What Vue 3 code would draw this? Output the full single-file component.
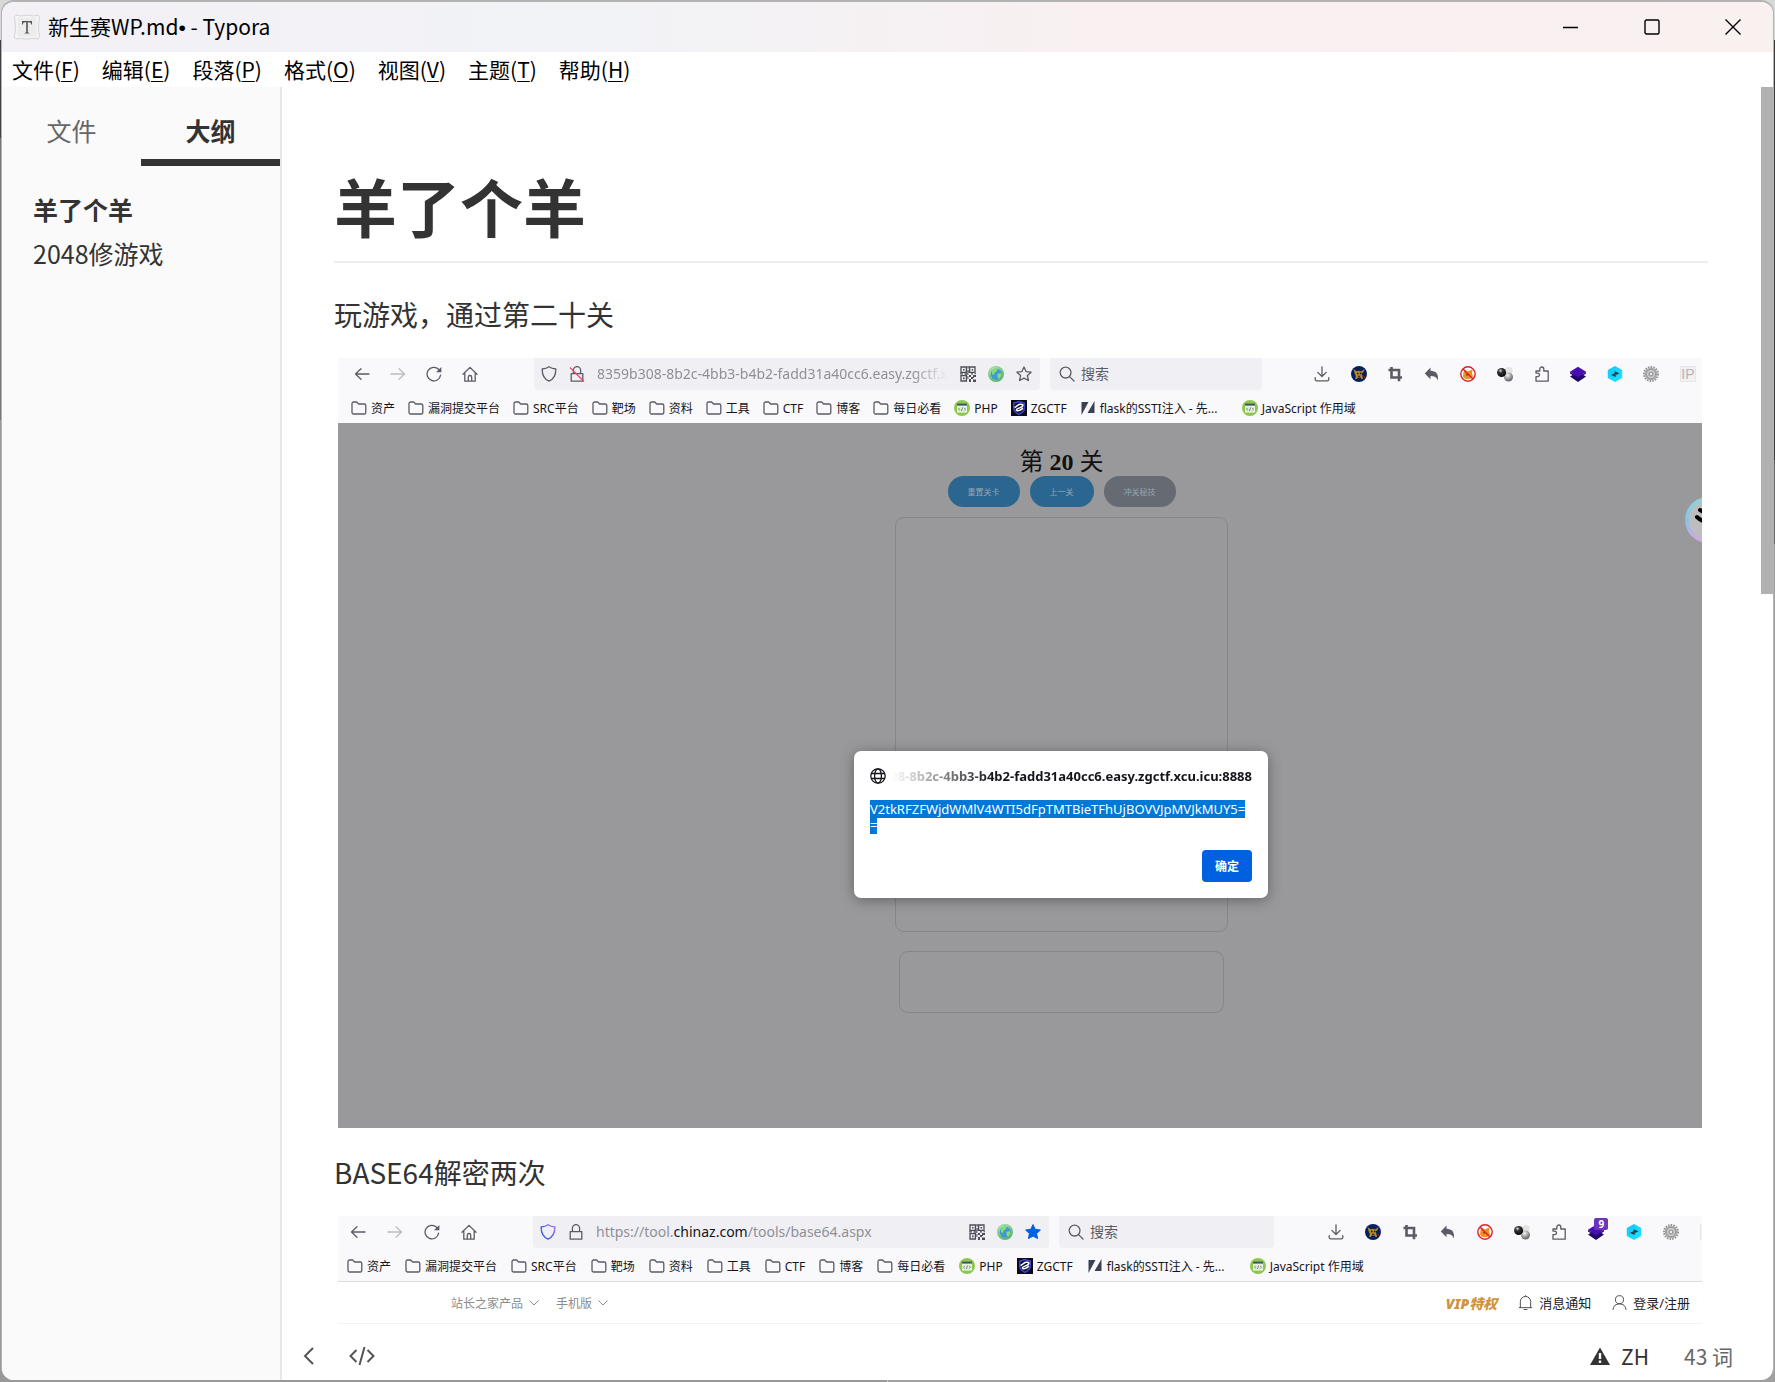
<script setup>
const menus = [
  ['文件', 'F'],
  ['编辑', 'E'],
  ['段落', 'P'],
  ['格式', 'O'],
  ['视图', 'V'],
  ['主题', 'T'],
  ['帮助', 'H'],
]

const line = 'fill="none" stroke="#5b5b66" stroke-width="1.3" stroke-linecap="round" stroke-linejoin="round"'

const icons = {
  back: `<path ${line} d="M15 8H1.5M7 2.8L1.5 8L7 13.2"/>`,
  forward: '<path fill="none" stroke="#bcbcc2" stroke-width="1.3" stroke-linecap="round" stroke-linejoin="round" d="M1 8h13.5M9 2.8L14.5 8L9 13.2"/>',
  reload: `<path ${line} d="M14.6 9.2A6.8 6.8 0 1 1 12.6 3.2"/><path fill="#5b5b66" d="M15.4 1v5.2h-5.4z"/>`,
  home: `<path ${line} d="M1 8.2L8 1.4l7 6.8M2.8 6.8v8.4h10.4V6.8M6.3 15v-3.8a1.7 1.7 0 0 1 3.4 0V15"/>`,
  shield: `<path ${line} d="M8 .8c2.2 1.6 4.5 2 6.8 2.2c.2 5.6-1.8 10-6.8 12.2C3 13 1 8.6 1.2 3C3.5 2.8 5.8 2.4 8 .8z"/>`,
  shieldBlue: '<defs><linearGradient id="sh" x1="1" y1="0" x2="0" y2="1"><stop offset="0" stop-color="#b070ff"/><stop offset=".6" stop-color="#3f62e6"/></linearGradient></defs><path fill="none" stroke="url(#sh)" stroke-width="1.4" d="M8 .8c2.2 1.6 4.5 2 6.8 2.2c.2 5.6-1.8 10-6.8 12.2C3 13 1 8.6 1.2 3C3.5 2.8 5.8 2.4 8 .8z"/>',
  lock: `<path ${line} d="M2.2 7.6h11.6v7.6H2.2zM4.4 7.4V4.2a3.6 3.6 0 0 1 7.2 0v3.2"/>`,
  lockOff: `<path ${line} d="M2.2 7.6h11.6v7.6H2.2zM4.4 7.4V4.2a3.6 3.6 0 0 1 7.2 0v3.2"/><path stroke="#f0436b" stroke-width="1.3" d="M1 1.5L15 15.5"/>`,
  qr: '<path fill="none" stroke="#4d4d58" stroke-width="1.3" d="M1 1h5.4v5.4H1zM9.6 1H15v5.4H9.6zM1 9.6h5.4V15H1z"/><path fill="#4d4d58" d="M3 3h1.6v1.6H3zM11.6 3h1.6v1.6h-1.6zM3 11.6h1.6v1.6H3zM7.4 0h1.3v2.5H7.4zM7.4 4h1.3v3h-1.3zM0 7.3h3v1.2H0zM4.5 7.3h4v1.5h-4zM9 9h2v2H9zM11 11h2v2h-2zM13 9h3v2h-2v1h-1zM9 13h2v3H9zM13 13.500h3V16h-3zM7.4 10h1v3h-1zM11 7.3h2v1.2h-2zM14.5 7.3H16v1h-1.5z"/>',
  globe: '<defs><radialGradient id="gl" cx=".4" cy=".3" r=".8"><stop offset="0" stop-color="#b9ecc0"/><stop offset="1" stop-color="#4fae5c"/></radialGradient></defs><circle cx="8" cy="8" r="8" fill="url(#gl)"/><circle cx="8.3" cy="8.2" r="5.6" fill="#3f9ad6"/><path fill="#8fdc6e" d="M4 5c1.5-2 4-3 6-2.4L9 5 6.5 6.5 6 9 4 8zM9.5 8l3.5-1 .5 2.5-2.5 3.5L9.5 11z"/>',
  star: `<path ${line} d="M8 1l2.1 4.6 5 .6-3.7 3.4 1 4.9L8 12.1l-4.4 2.4 1-4.9L.9 6.2l5-.6z"/>`,
  starOn: '<path fill="#0061e0" stroke="#0061e0" stroke-linejoin="round" d="M8 .6l2.2 4.7 5.2.7-3.8 3.5 1 5.1L8 12.1l-4.6 2.5 1-5.1L.6 6l5.2-.7z"/>',
  search: `<circle ${line} cx="6.6" cy="6.6" r="5.4"/><path ${line} d="M10.6 10.6L15 15"/>`,
  download: `<path ${line} d="M8 .8v9.4M3.8 6.400L8 10.5l4.2-4.1M1.2 11.6v1.6a1.6 1.6 0 0 0 1.6 1.6h10.4a1.6 1.6 0 0 0 1.6-1.6v-1.6"/>`,
  monkey: '<circle cx="8" cy="8" r="8" fill="#06205c"/><path fill="#b8892b" d="M2.500 3l1.500 1.200 2 1L8 4.800l2 .6 1.500-1L13.500 3l-1 3-1.800 1.500 .5 1.500.8 4h-1.500l-.8-1.500h-3L6 13H4.300l.5-3.500L4 8.500z"/><path fill="#18181c" d="M6 6.800h1.500v1.400H6zM8.900 6.800h1.500v1.400H8.900zM7 9.800h2.200v1H7z"/><path fill="#8d1b1b" d="M12.5 9.500l2 1-1.5 2z"/>',
  crop: '<path fill="none" stroke="#5b5b66" stroke-width="2.6" d="M1.5 4H12v11.2M4.5 1v10.5H15"/>',
  undo: '<path fill="#5b5b66" d="M6.5 1.500v3.2c5 .2 8.6 2.8 7.2 9.8-.8-3-3-4.4-7.2-4.4v3.2L.8 7.4z"/>',
  noFox: '<path fill="#f09219" d="M3.500 6l2-2 2 1.5 5-2-.5 4 1 3-3 2.500H5.500L3 10.5z"/><path fill="#7e4a16" d="M6 8h2v1.5H6z"/><circle cx="8" cy="8" r="7.2" fill="none" stroke="#d8232f" stroke-width="1.4"/><path stroke="#d8232f" stroke-width="1.5" d="M3 3l10 10"/>',
  balls: '<defs><radialGradient id="b1" cx=".38" cy=".3" r=".7"><stop offset="0" stop-color="#ddd"/><stop offset=".35" stop-color="#333"/><stop offset="1" stop-color="#080808"/></radialGradient><radialGradient id="b2" cx=".4" cy=".3" r=".8"><stop offset="0" stop-color="#f4f4f4"/><stop offset=".6" stop-color="#8a8a8a"/><stop offset="1" stop-color="#555"/></radialGradient></defs><circle cx="12" cy="4.5" r="3.6" fill="#e3e3e3"/><circle cx="11.5" cy="11" r="4.5" fill="url(#b2)"/><circle cx="4.6" cy="6.5" r="4.5" fill="url(#b1)"/>',
  puzzle: `<path ${line} d="M2 15.2v-4.6h1.8a1.7 1.7 0 0 0 0-3.5H2V5h3.8V3a2 2 0 0 1 4 0v2H14.2v10.2z"/>`,
  layers: '<path fill="#1f0763" d="M0 10.5L8 6l8 4.500L8 16z"/><path fill="#4a0db4" d="M0 5.800L8 .8l8 5-8 5.4z"/><path fill="#2c0a86" d="M0 5.8l8 5.4 8-5.4v1.8l-8 5.2-8-5.2z"/>',
  hex: '<defs><linearGradient id="hx" x1="0" y1="0" x2="1" y2="1"><stop offset="0" stop-color="#10c4ff"/><stop offset="1" stop-color="#1fe6ff"/></linearGradient></defs><path fill="url(#hx)" d="M8 0l7.2 4v8L8 16 .8 12V4z"/><path fill="#27424e" d="M3.8 9l4-2v1.3l1 .2V11zM12.6 7.2l-4 2V8l-1-.3V5.2z"/>',
  gear: '<circle cx="8" cy="8" r="7" fill="none" stroke="#929292" stroke-width="2" stroke-dasharray="1.6 1.1"/><circle cx="8" cy="8" r="6.200" fill="#a9a9a9"/><circle cx="8" cy="8" r="4.600" fill="#cfcfcf" stroke="#8a8a8a" stroke-width=".7"/><circle cx="8" cy="8" r="2.600" fill="#9a9a9a"/><circle cx="8" cy="8" r="1.200" fill="#eee"/>',
  folder: `<path ${line} d="M1 3.6a1.6 1.6 0 0 1 1.6-1.6h3.1l1.9 2h5.6A1.6 1.6 0 0 1 14.8 5.6v6.8a1.6 1.6 0 0 1-1.6 1.6H2.6A1.6 1.6 0 0 1 1 12.4z"/>`,
  runoob: '<circle cx="8" cy="8" r="8" fill="#8cc84b"/><path fill="#e6f1dc" d="M3 4h10v8.600H3z"/><path fill="#3d5560" d="M3 3.600h10v2H3z"/><path fill="none" stroke="#3d5560" stroke-width=".7" d="M5.800 7.800L4.600 9.200 5.800 10.600M10.200 7.800l1.200 1.400-1.200 1.400M8.500 7.500l-1 3.500"/>',
  zgctf: '<path fill="#0a0a1c" d="M0 0h16v16H0z"/><path fill="#3b46c8" d="M8 .8l6 1.6v6c0 3.2-3 5-6 6.8-3-1.800-6-3.600-6-6.800v-6z"/><path fill="#0d0f33" d="M8 2.600l4.500 1.200v4.400c0 2.400-2.200 4-4.500 5.400-2.300-1.400-4.500-3-4.500-5.400V3.800z"/><path fill="none" stroke="#fff" stroke-width="1.500" d="M3.500 7.500c2.500-.5 3-3 5.500-3.300s4 .8 2 2.400-5 1.600-5.500 3 2 1.400 3.500.6 2-1.600 3-2"/>',
  flask: '<path fill="#3a4252" d="M1.500 2h7L1.500 15zM14.5 1v12h-7z"/>',
}

const bookmarks = [
  ['folder', '资产'],
  ['folder', '漏洞提交平台'],
  ['folder', 'SRC平台'],
  ['folder', '靶场'],
  ['folder', '资料'],
  ['folder', '工具'],
  ['folder', 'CTF'],
  ['folder', '博客'],
  ['folder', '每日必看'],
  ['runoob', 'PHP'],
  ['zgctf', 'ZGCTF'],
  ['flask', 'flask的SSTI注入 - 先...'],
  ['runoob', 'JavaScript 作用域'],
]

const nav = [
  ['back', '后退'],
  ['forward', '前进'],
  ['reload', '刷新'],
  ['home', '主页'],
]

const tools = ['download', 'monkey', 'crop', 'undo', 'noFox', 'balls', 'puzzle', 'layers', 'hex', 'gear']

const shots = [
  { id: 'game', text: '玩游戏，通过第二十关', shield: 'shield', lock: 'lockOff', star: 'star' },
  { id: 'tool', text: 'BASE64解密两次', shield: 'shieldBlue', lock: 'lock', star: 'starOn', badge: '9' },
]
</script>

<template>
  <div class="desktop">
    <div class="window">
      <header class="titlebar">
        <svg class="app-icon" viewBox="0 0 28 28">
          <path d="M3 2q4 2 11 0q7 2 11 0q3 2 1 6q-1 6 0 12q2 4-1 6q-4-1-11 0q-7-1-11 0q-3-2-1-6q1-6 0-12q-2-4 1-6z" fill="#f4f4f4" stroke="#d4d4d6" />
          <path d="M4.500 4.500h19v19h-19z" fill="#ececec" />
          <path d="M9 8h10v3.500h-.8c-.2-1.600-.8-2.300-2.200-2.300h-1.200v9.600c0 .8.400 1 1.600 1.100v.7h-4.800v-.7c1.200-.1 1.600-.3 1.600-1.100V9.200H12c-1.400 0-2 .7-2.200 2.300H9z" fill="#555" />
        </svg>
        <h1 class="app-title">新生赛WP.md<span class="dot">•</span> - Typora</h1>
        <div class="controls">
          <button aria-label="最小化"><svg viewBox="0 0 16 16"><path d="M0 8.500h15" /></svg></button>
          <button aria-label="最大化"><svg viewBox="0 0 16 16"><rect x="1" y="1" width="14" height="14" rx="1.500" /></svg></button>
          <button aria-label="关闭"><svg viewBox="0 0 16 16"><path d="M.5.500l15 15M15.500.500l-15 15" /></svg></button>
        </div>
      </header>

      <nav class="menubar">
        <button v-for="[label, key] in menus" :key="key">{{ label }}(<u>{{ key }}</u>)</button>
      </nav>

      <div class="body">
        <aside class="sidebar">
          <div class="tabs">
            <button class="tab">文件</button>
            <button class="tab active">大纲</button>
          </div>
          <ul class="outline">
            <li><a href="#sheep" class="current">羊了个羊</a></li>
            <li><a href="#g2048">2048修游戏</a></li>
          </ul>
        </aside>

        <div class="editor">
          <main class="page">
            <h2 id="sheep" class="heading">羊了个羊</h2>

            <template v-for="shot in shots" :key="shot.id">
              <p class="para">{{ shot.text }}</p>
              <div class="shot" :class="shot.id">
                <div class="toolbar">
                  <div class="nav">
                    <button v-for="[icon, label] in nav" :key="icon" :aria-label="label">
                      <svg viewBox="0 0 16 16" v-html="icons[icon]"></svg>
                    </button>
                  </div>
                  <div class="address">
                    <svg viewBox="0 0 16 16" v-html="icons[shot.shield]"></svg>
                    <svg viewBox="0 0 16 16" v-html="icons[shot.lock]"></svg>
                    <input v-if="shot.id === 'game'" class="url fade" aria-label="地址" value="8359b308-8b2c-4bb3-b4b2-fadd31a40cc6.easy.zgctf.xcu.icu:8888" readonly />
                    <span v-else class="url">https://tool.<b>chinaz.com</b>/tools/base64.aspx</span>
                    <svg viewBox="0 0 16 16" v-html="icons.qr"></svg>
                    <svg viewBox="0 0 16 16" v-html="icons.globe"></svg>
                    <svg viewBox="0 0 16 16" v-html="icons[shot.star]"></svg>
                  </div>
                  <div class="search">
                    <svg viewBox="0 0 16 16" v-html="icons.search"></svg>
                    <input aria-label="搜索" placeholder="搜索" />
                  </div>
                  <div class="tools">
                    <button v-for="tool in tools" :key="tool" :aria-label="tool">
                      <svg viewBox="0 0 16 16" v-html="icons[tool]"></svg>
                      <span v-if="shot.badge && tool === 'layers'" class="badge">{{ shot.badge }}</span>
                    </button>
                    <span class="ip">{{ shot.id === 'game' ? 'IP' : '' }}</span>
                  </div>
                </div>

                <div class="bookmarks">
                  <a v-for="[icon, label] in bookmarks" :key="label" href="#" :class="icon">
                    <svg viewBox="0 0 16 16" v-html="icons[icon]"></svg>{{ label }}
                  </a>
                </div>

                <div v-if="shot.id === 'game'" class="stage">
                  <h3 class="level">第 <b>20</b> 关</h3>
                  <div class="actions">
                    <button>重置关卡</button>
                    <button>上一关</button>
                    <button class="muted">冲关秘技</button>
                  </div>
                  <div class="board"></div>
                  <div class="tray"></div>

                  <div class="dialog" role="dialog">
                    <div class="origin">
                      <svg viewBox="0 0 16 16"><circle cx="8" cy="8" r="7.200" /><ellipse cx="8" cy="8" rx="3.400" ry="7.200" /><path d="M1.500 5.500h13M1.500 10.500h13" /></svg>
                      <div class="host"><span>308-8b2c-4bb3-b4b2-fadd31a40cc6.easy.zgctf.xcu.icu:8888</span></div>
                    </div>
                    <p class="message"><mark>V2tkRFZFWjdWMlV4WTI5dFpTMTBieTFhUjBOVVJpMVJkMUY5=<br />=</mark></p>
                    <button class="ok">确定</button>
                  </div>

                  <svg class="floater" viewBox="0 0 46 46">
                    <defs>
                      <linearGradient id="ring" x1="0" y1="0" x2="0" y2="1">
                        <stop offset="0" stop-color="#8fd3dc" />
                        <stop offset=".5" stop-color="#86c3e2" />
                        <stop offset="1" stop-color="#d6a8e2" />
                      </linearGradient>
                    </defs>
                    <circle cx="23" cy="23" r="21" fill="#bdbdbf" stroke="url(#ring)" stroke-width="4" />
                    <path d="M12 20q5 5 10 4M15 13l5 3" fill="none" stroke="#000" stroke-width="4" stroke-linecap="round" />
                  </svg>
                </div>

                <div v-else class="sitebar">
                  <a href="#">站长之家产品 <svg class="chev" viewBox="0 0 10 10"><path d="M.5 2.500L5 7l4.500-4.500" /></svg></a>
                  <a href="#">手机版 <svg class="chev" viewBox="0 0 10 10"><path d="M.5 2.500L5 7l4.500-4.500" /></svg></a>
                  <div class="account">
                    <a href="#" class="vip">VIP特权</a>
                    <a href="#"><svg viewBox="0 0 16 16"><path d="M1 13.500h14M2.500 13.500V7a5.500 5.500 0 0 1 11 0v6.500M6 15.500h4M8 .3v1.200" /></svg>消息通知</a>
                    <a href="#"><svg viewBox="0 0 16 16"><circle cx="8" cy="5" r="4.300" /><path d="M1 15.800c.3-4.200 3-6.300 7-6.300s6.700 2.100 7 6.300" /></svg>登录/注册</a>
                  </div>
                </div>
              </div>
            </template>
          </main>

          <footer class="status">
            <button aria-label="隐藏侧边栏"><svg class="collapse" viewBox="0 0 12 20"><path d="M10 2L2 10l8 8" /></svg></button>
            <button aria-label="源代码模式"><svg class="source" viewBox="0 0 26 20"><path d="M7.500 4L1.500 10l6 6M18.500 4l6 6-6 6M15.500 1l-5 18" /></svg></button>
            <div class="right">
              <button class="lang">
                <svg viewBox="0 0 20 18"><path fill="#333" d="M10 .5L20 18H0z" /><path fill="#fff" d="M8.800 6h2.400v6H8.800zM8.800 13.500h2.400V16H8.800z" /></svg>
                ZH
              </button>
              <button class="count">43 词</button>
            </div>
          </footer>
        </div>
        <div class="scrollbar"><div class="thumb"></div></div>
      </div>
    </div>
  </div>
</template>

<style>
body {
  margin: 0;
}
</style>

<style scoped>
.desktop,
.desktop * {
  box-sizing: border-box;
}

.desktop {
  height: 100vh;
  padding: 2px;
  overflow: hidden;
  font-family: "Noto Sans", "Noto Sans CJK SC", sans-serif;
  color: #333;
  background:
    linear-gradient(#d8d8d8 40px, #3f3f44 40px 138px, #777 138px 420px, #999 420px) left / 50% 100% no-repeat,
    linear-gradient(#d8d8d8 40px, #3c3c3c 40px 460px, #666 460px 544px, #a0a0a0 544px) right / 50% 100% no-repeat;
}

button,
input {
  padding: 0;
  border: 0;
  background: none;
  font: inherit;
  color: inherit;
}

a {
  color: inherit;
  text-decoration: none;
}

svg {
  display: block;
  flex: none;
}

.window {
  display: flex;
  flex-direction: column;
  height: 100%;
  overflow: hidden;
  border-radius: 12px;
  background: #fff;
  box-shadow: 0 -1px 0 1px #b3b3b3;
}

.titlebar {
  display: flex;
  align-items: center;
  flex: none;
  height: 50px;
  padding-left: 11px;
  background: linear-gradient(90deg, #f3f0f6, #f1f3f7 32%, #f8f0f1 60%, #f9f0f0);
}

.app-icon {
  width: 28px;
  height: 28px;
}

.app-title {
  margin: 0 0 0 7px;
  font: 21px/24px "Noto Sans CJK SC", sans-serif;
  color: #000;
}

.dot {
  font-family: "Liberation Sans", sans-serif;
}

.controls {
  display: flex;
  align-self: stretch;
  margin-left: auto;
}

.controls button {
  display: grid;
  place-items: center;
  width: 81px;
}

.controls svg {
  width: 16px;
  height: 16px;
  fill: none;
  stroke: #000;
  stroke-width: 1.4;
}

.menubar {
  display: flex;
  flex: none;
  gap: 22px;
  height: 35px;
  padding-left: 10px;
  font: 21px "Noto Sans CJK SC", sans-serif;
  color: #000;
}

.menubar button {
  line-height: 35px;
}

.menubar u {
  text-underline-offset: 3px;
  text-decoration-thickness: 1px;
}

.body {
  display: flex;
  flex: 1;
  min-height: 0;
}

.sidebar {
  flex: none;
  width: 280px;
  border-right: 2px solid #e8e8e8;
  background: #fafafa;
  font-family: "Noto Sans CJK SC", sans-serif;
}

.tabs {
  display: flex;
}

.tab {
  flex: 1;
  height: 79px;
  padding-top: 14px;
  border-bottom: 7px solid transparent;
  font-size: 25px;
  color: #666;
}

.tab.active {
  border-color: #333;
  font-weight: 700;
  color: #333;
}

.outline {
  margin: 0;
  padding: 21px 0 0 31px;
  list-style: none;
  font-size: 25px;
  line-height: 44px;
}

.current {
  font-weight: 700;
}

.editor {
  display: flex;
  flex-direction: column;
  flex: 1;
  min-width: 0;
}

.page {
  flex: 1;
  min-height: 0;
  padding: 0 53px 0 52px;
  overflow: hidden;
}

.heading {
  margin: 79px 0 28px;
  padding-bottom: 11px;
  border-bottom: 2px solid #eee;
  font-size: 63px;
  line-height: 84px;
}

.para {
  margin: 21px 0;
  font: 28px/46px "Noto Sans CJK SC", sans-serif;
}

.shot {
  margin: 0 6px 21px 4px;
  overflow: hidden;
  background: #f9f9fb;
}

.toolbar {
  display: flex;
  height: 32px;
}

.toolbar svg,
.bookmarks svg {
  width: 16px;
  height: 16px;
}

.nav {
  display: flex;
  flex: none;
  gap: 20px;
  padding: 0 56px 0 16px;
}

.address {
  display: flex;
  align-items: center;
  flex: 1;
  min-width: 0;
  gap: 12px;
  padding: 0 8px 0 7px;
  border-radius: 0 0 4px 4px;
  background: #f0f0f4;
}

.url {
  flex: 1;
  min-width: 0;
  overflow: hidden;
  font-size: 14px;
  line-height: 20px;
  color: #8f8f98;
  white-space: nowrap;
}

.url b {
  font-weight: 400;
  color: #15141a;
}

.fade {
  mask-image: linear-gradient(90deg, #000 90%, transparent);
}

.search {
  display: flex;
  align-items: center;
  flex: none;
  gap: 6px;
  width: 212px;
  margin-left: 10px;
  padding-left: 9px;
  border-radius: 0 0 4px 4px;
  background: #f0f0f4;
}

.search input {
  flex: 1;
  min-width: 0;
  font-size: 14px;
  line-height: 20px;
}

.search input::placeholder {
  color: #5b5b66;
  opacity: 1;
}

.tools {
  display: flex;
  align-items: center;
  justify-content: space-between;
  flex: none;
  width: 382px;
  margin: 0 6px 0 52px;
}

.tools button {
  position: relative;
}

.ip {
  width: 16px;
  height: 16px;
  border: 1px solid #e6e6e8;
  background: #f1f1f2;
  font: 14px/14px "Liberation Sans", sans-serif;
  text-align: center;
  color: #b4b4b6;
}

.badge {
  position: absolute;
  top: -6px;
  left: 6px;
  width: 14px;
  height: 12px;
  border-radius: 2px;
  background: #6a35b8;
  font-size: 10px;
  font-weight: 700;
  line-height: 12px;
  color: #fff;
}

.bookmarks {
  display: flex;
  align-items: center;
  gap: 13px;
  height: 33px;
  padding: 3px 0 0 13px;
  font-size: 12px;
  color: #15141a;
  white-space: nowrap;
}

.bookmarks a {
  display: flex;
  align-items: center;
  gap: 4px;
}

.bookmarks .flask {
  width: 149px;
}

.tool .nav {
  gap: 21px;
  padding: 0 56px 0 12px;
}

.tool .search {
  width: 215px;
}

.tool .tools {
  width: 388px;
  margin: 0 -14px 0 54px;
}

.tool .bookmarks {
  gap: 14px;
  padding-left: 9px;
}

.stage {
  position: relative;
  display: flex;
  flex-direction: column;
  align-items: center;
  height: 705px;
  padding: 25px 0 0 83px;
  overflow: hidden;
  background: #99999b;
}

.level {
  margin: 0;
  font: 24px/28px "Liberation Serif", "Noto Sans CJK SC", serif;
  color: #111;
}

.actions {
  display: flex;
  gap: 10px;
}

.actions button {
  height: 31px;
  padding: 0 20px;
  border-radius: 16px;
  background: #2b6690;
  font-size: 8px;
  color: #98a4b0;
}

.actions .muted {
  background: #666b73;
}

.board,
.tray {
  flex: none;
  width: 333px;
  height: 415px;
  margin-top: 10px;
  border: 1px solid #868688;
  border-radius: 9px;
}

.tray {
  width: 325px;
  height: 62px;
  margin-top: 19px;
}

.dialog {
  position: absolute;
  top: 328px;
  left: calc(50% + 41px);
  display: flex;
  flex-direction: column;
  width: 414px;
  height: 147px;
  padding: 16px;
  border-radius: 7px;
  background: #fff;
  box-shadow: 0 2px 14px rgba(0, 0, 0, 0.35);
  transform: translateX(-50%);
}

.origin {
  display: flex;
  align-items: center;
  gap: 6px;
  height: 18px;
}

.origin svg {
  width: 16px;
  height: 16px;
  fill: none;
  stroke: #15141a;
  stroke-width: 1.3;
}

.host {
  display: flex;
  justify-content: flex-end;
  flex: 1;
  min-width: 0;
  overflow: hidden;
  font-size: 13px;
  font-weight: 700;
  line-height: 18px;
  color: #15141a;
  white-space: nowrap;
  mask-image: linear-gradient(90deg, transparent, #000 28%);
}

.message {
  margin: 16px 0 0;
  font-size: 13px;
  line-height: 16px;
}

.message mark {
  background: #0078d7;
  color: #fff;
}

.ok {
  align-self: flex-end;
  width: 50px;
  height: 32px;
  margin-top: auto;
  border-radius: 4px;
  background: #0061e0;
  font-size: 12px;
  font-weight: 700;
  color: #fff;
}

.floater {
  position: absolute;
  top: 74px;
  right: -29px;
  width: 46px;
  height: 46px;
}

.sitebar {
  display: flex;
  align-items: center;
  gap: 17px;
  height: 43px;
  padding: 0 12px 0 113px;
  border-top: 1px solid #dedee0;
  border-bottom: 1px solid #f2f2f2;
  background: #fff;
  font-size: 12px;
  color: #8c8c8c;
}

.sitebar a {
  display: flex;
  align-items: center;
  gap: 6px;
}

.sitebar svg {
  width: 15px;
  height: 15px;
  fill: none;
  stroke: #444;
}

.sitebar .chev {
  width: 10px;
  height: 10px;
  stroke: #8c8c8c;
}

.account {
  display: flex;
  gap: 21px;
  margin-left: auto;
  font-size: 13px;
  color: #222;
}

.account .vip {
  font-size: 14px;
  font-style: italic;
  font-weight: 900;
  color: #cf9440;
}

.status {
  display: flex;
  align-items: center;
  flex: none;
  height: 49px;
  padding: 0 28px 0 21px;
  background: #fff;
  font: 21px "Noto Sans CJK SC", sans-serif;
}

.status svg {
  fill: none;
  stroke: #555;
  stroke-width: 2;
}

.collapse {
  width: 12px;
  height: 20px;
  margin-right: 34px;
}

.source {
  width: 26px;
  height: 20px;
}

.right {
  display: flex;
  gap: 35px;
  margin-left: auto;
}

.lang {
  display: flex;
  align-items: center;
  gap: 11px;
}

.status .lang svg {
  width: 20px;
  height: 18px;
  stroke: none;
}

.count {
  color: #666;
}

.scrollbar {
  flex: none;
  width: 12px;
}

.thumb {
  height: 39.2%;
  background: #b1b1b1;
}
</style>
